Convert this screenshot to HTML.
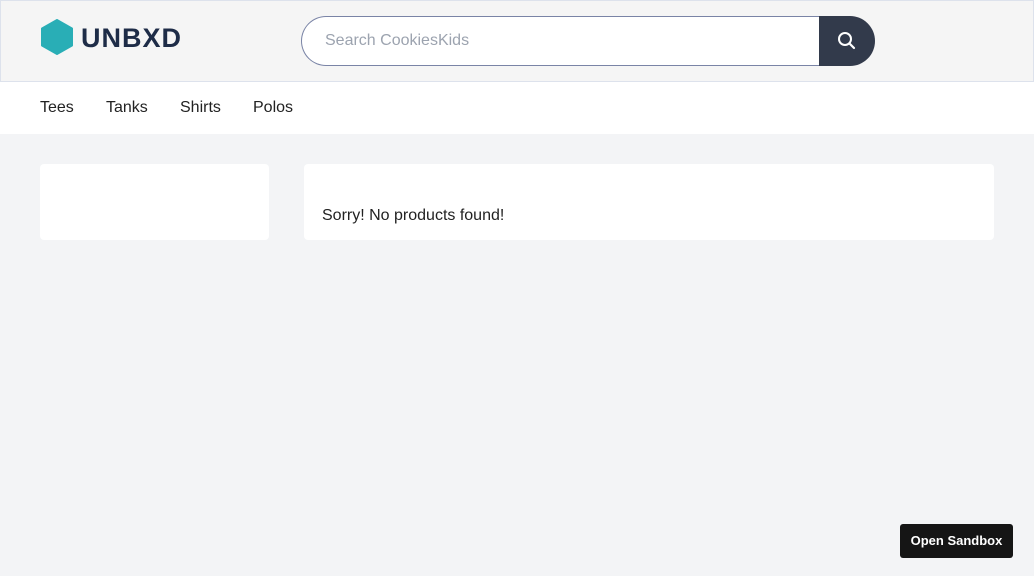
<!DOCTYPE html>
<html><head><style>
*{margin:0;padding:0;box-sizing:border-box}
body{width:1034px;height:576px;background:#f3f4f6;font-family:"Liberation Sans",sans-serif;position:relative;overflow:hidden}
.hdr{position:absolute;left:0;top:0;width:1034px;height:82px;background:#f5f5f5;border:1px solid #dde2ec}
.logo{position:absolute;left:40px;top:19px}
.logotext{position:absolute;left:81px;top:23px;font-size:27px;font-weight:bold;color:#1e2c47;letter-spacing:1px}
.search{position:absolute;left:301px;top:16px;width:520px;height:50px;border:1px solid #7a84a6;border-right:none;border-radius:25px 0 0 25px;background:#fff}
.search span{position:absolute;left:23px;top:15px;font-size:16px;color:#9ca3af}
.btn{position:absolute;left:819px;top:16px;width:56px;height:50px;background:#323a4b;border-radius:0 25px 25px 0}
.nav{position:absolute;left:0;top:82px;width:1034px;height:52px;background:#fff}
.nav a{position:absolute;top:17px;font-size:16px;color:#222}
.card{position:absolute;background:#fff;border-radius:4px}
.sb{position:absolute;left:900px;top:524px;width:113px;height:34px;background:#151515;border-radius:3px;color:#fff;font-size:13px;font-weight:bold;text-align:center;line-height:34px}
</style></head><body>
<div class="hdr"></div>
<svg class="logo" width="34" height="36" viewBox="0 0 34 36"><polygon points="17,1 32,9.5 32,26.5 17,35 2,26.5 2,9.5" fill="#29aeb6" stroke="#29aeb6" stroke-width="2" stroke-linejoin="round"/></svg>
<div class="logotext">UNBXD</div>
<div class="search"><span>Search CookiesKids</span></div>
<div class="btn"><svg width="56" height="50" viewBox="0 0 56 50"><circle cx="26" cy="23" r="6" fill="none" stroke="#fff" stroke-width="2"/><line x1="30.5" y1="27.5" x2="35" y2="32" stroke="#fff" stroke-width="2.2" stroke-linecap="round"/></svg></div>
<div class="nav"><a style="left:40px">Tees</a><a style="left:106px">Tanks</a><a style="left:180px">Shirts</a><a style="left:253px">Polos</a></div>
<div class="card" style="left:40px;top:164px;width:229px;height:76px"></div>
<div class="card" style="left:304px;top:164px;width:690px;height:76px"><div style="position:absolute;left:18px;top:43px;font-size:16px;color:#222">Sorry! No products found!</div></div>
<div class="sb">Open Sandbox</div>
</body></html>
